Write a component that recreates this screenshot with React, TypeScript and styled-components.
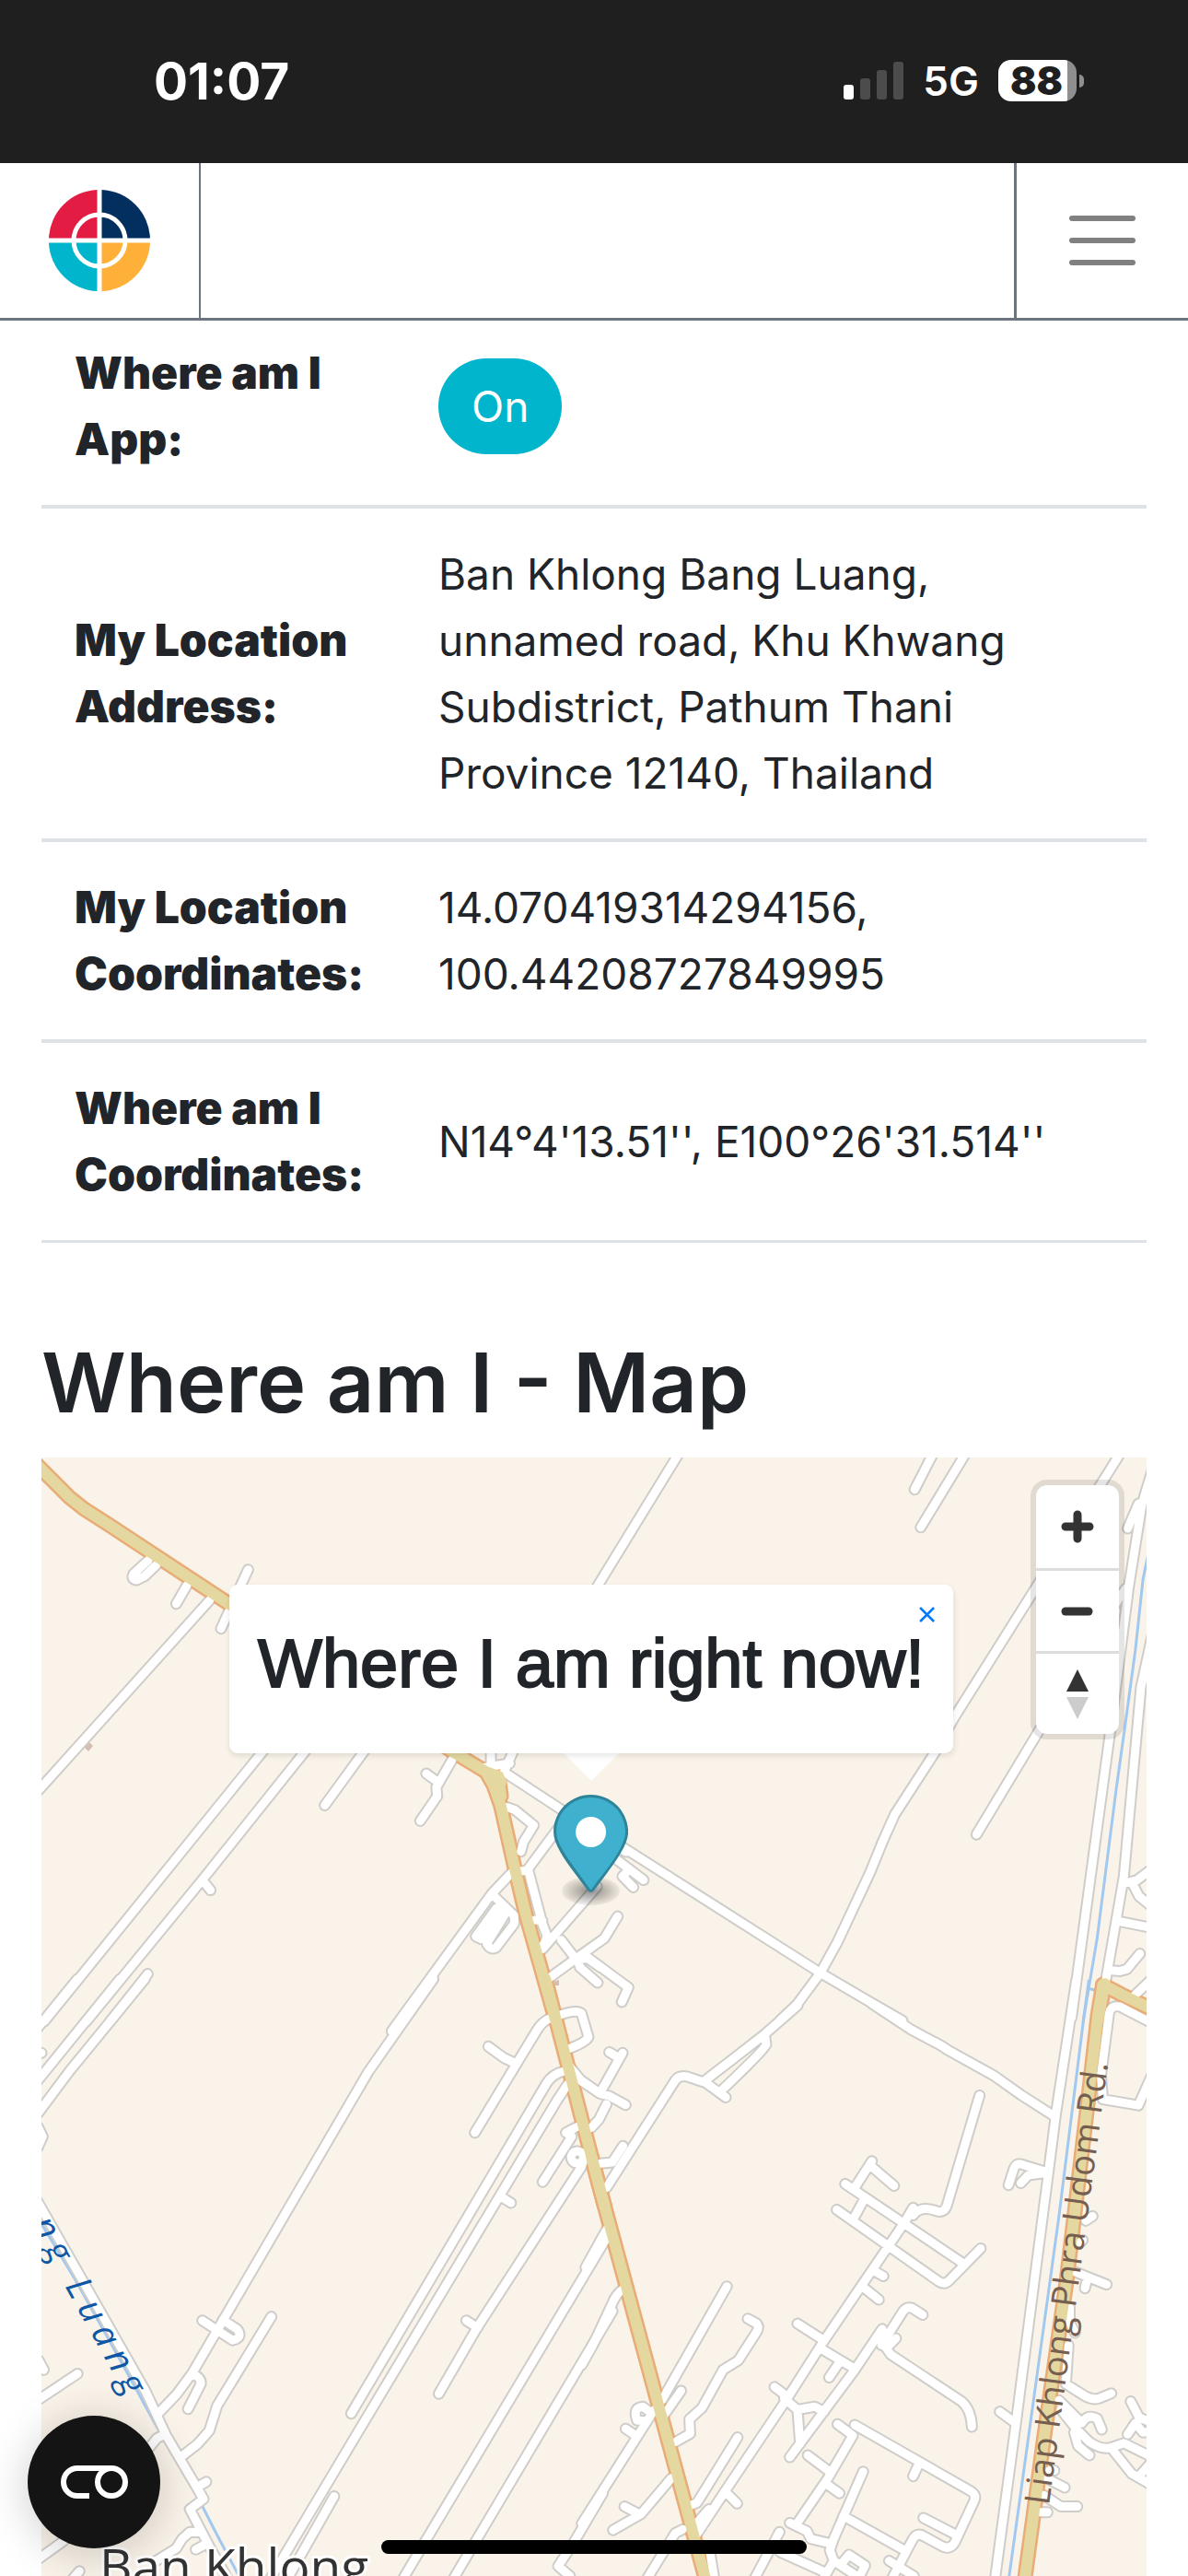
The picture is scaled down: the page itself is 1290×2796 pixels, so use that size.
import React from "react";
import styled, { createGlobalStyle } from "styled-components";

const GlobalStyle = createGlobalStyle`
  *, *::before, *::after { box-sizing: border-box; }
  body {
    margin: 0;
    background: #fff;
    color: #212529;
    font-family: Inter, "Liberation Sans", sans-serif;
    font-size: 46px;
    line-height: 72px;
  }
`;

const Page = styled.div`
  display: flex;
  flex-direction: column;
  min-height: 100vh;
`;

/* ---------- status bar ---------- */

const StatusBar = styled.div`
  display: flex;
  align-items: center;
  justify-content: space-between;
  height: 177px;
  padding: 0 113px 2px 167px;
  background: #1f1f1f;
  color: #fff;
`;

const Clock = styled.time`
  font-size: 55px;
  font-weight: 700;
`;

const StatusIcons = styled.div`
  display: flex;
  align-items: center;
`;

const Network = styled.span`
  margin: 0 21px;
  font-size: 44px;
  font-weight: 600;
`;

const Battery = styled.div`
  display: flex;
  align-items: center;
  gap: 3px;
`;

const BatteryBody = styled.div`
  width: 85px;
  height: 45px;
  padding-left: 13px;
  border-radius: 14px;
  background: linear-gradient(to right, #fff 75px, #8f8f8f 75px);
  color: #1f1f1f;
  font-size: 42px;
  font-weight: 900;
  line-height: 45px;
`;

const BatteryTip = styled.div`
  width: 5px;
  height: 14px;
  border-radius: 0 5px 5px 0;
  background: #8f8f8f;
`;

/* ---------- navigation ---------- */

const NavBar = styled.header`
  display: flex;
  align-items: stretch;
  justify-content: space-between;
  height: 171px;
  border-bottom: 3px solid #6c757d;
  background: #fff;
`;

const LogoLink = styled.a`
  display: flex;
  align-items: center;
  padding: 0 53px;
  border-right: 2px solid #6c757d;
`;

const MenuButton = styled.button`
  display: flex;
  flex-direction: column;
  align-items: center;
  justify-content: center;
  gap: 18px;
  padding: 0 57px;
  border: 0;
  border-left: 3px solid #6c757d;
  background: none;
`;

const MenuLine = styled.span`
  width: 72px;
  height: 6px;
  border-radius: 3px;
  background: #808080;
`;

/* ---------- content ---------- */

const Content = styled.main`
  display: flex;
  flex: 1;
  flex-direction: column;
  padding: 0 45px;
`;

const InfoTable = styled.table`
  width: 100%;
  margin-bottom: 94px;
  border-collapse: separate;
  border-spacing: 0;
  border-bottom: 3px solid #dee2e6;
`;

const Row = styled.tr`
  & + & > * {
    border-top: 4px solid #dee2e6;
    padding-top: 35px;
  }
`;

const Label = styled.th`
  width: 395px;
  padding: 21px 36px 35px;
  font-size: 48px;
  font-weight: 900;
  text-align: left;
`;

const Value = styled.td`
  padding: 21px 36px 35px;
`;

const ToggleButton = styled.button`
  display: block;
  padding: 16px 36px;
  border: 0;
  border-radius: 52px;
  background: #00b5cc;
  color: #fff;
  font: inherit;
`;

const Heading = styled.h2`
  margin: 0 0 24px;
  font-size: 90px;
  font-weight: 600;
  line-height: 115px;
`;

/* ---------- map ---------- */

const MapFrame = styled.section`
  position: relative;
  flex: 1;
  min-height: 900px;
  overflow: hidden;
  background: #faf3e9;
`;

const MapCanvas = styled.svg`
  position: absolute;
  inset: 0;
  width: 100%;
  height: 100%;
`;

const MapControls = styled.div`
  position: absolute;
  top: 30px;
  right: 30px;
  display: flex;
  flex-direction: column;
  width: 90px;
  border-radius: 12px;
  background: #fff;
  box-shadow: 0 0 0 6px rgba(0, 0, 0, 0.1);
`;

const ControlButton = styled.button`
  display: flex;
  align-items: center;
  justify-content: center;
  height: 90px;
  padding: 0;
  border: 0;
  background: none;

  & + & {
    border-top: 3px solid #ddd;
  }
`;

const PlaceAnchor = styled.div`
  position: absolute;
  top: 138px;
  left: 49.75%;
  display: flex;
  flex-direction: column;
  align-items: center;
  transform: translateX(-50%);
`;

const Popup = styled.div`
  position: relative;
  padding: 30px 31px;
  border-radius: 9px;
  background: #fff;
  box-shadow: 0 3px 6px rgba(0, 0, 0, 0.1);
`;

const PopupTitle = styled.h3`
  margin: 0;
  padding: 13px 0 24px;
  font-family: "Liberation Sans", Arial, sans-serif;
  font-size: 74px;
  font-weight: 400;
  line-height: 86px;
  white-space: nowrap;
  -webkit-text-stroke: 2px #212529;
`;

const PopupClose = styled.button`
  position: absolute;
  top: 15px;
  right: 11px;
  display: flex;
  padding: 9px;
  border: 0;
  background: none;
`;

const PopupTip = styled.div`
  margin-bottom: 15px;
  border: 30px solid transparent;
  border-top-color: #fff;
  border-bottom: 0;
`;

/* ---------- floating parts ---------- */

const CookieButton = styled.button`
  position: fixed;
  bottom: 30px;
  left: 30px;
  display: flex;
  align-items: center;
  justify-content: center;
  width: 144px;
  height: 144px;
  padding: 0;
  border: 0;
  border-radius: 50%;
  background: #141414;
  box-shadow: 0 6px 48px rgba(0, 0, 0, 0.2);
`;

const HomeIndicator = styled.div`
  position: fixed;
  bottom: 24px;
  left: 50%;
  width: 462px;
  height: 15px;
  border-radius: 8px;
  background: #000;
  transform: translateX(-50%);
`;

/* ---------- map data ---------- */

type Tile = { transform: string; lanes: string; highways: string; water: string };

const tiles: Tile[] = [
  {
    transform: "translate(-5 -12) scale(.40816 .39541)",
    highways:
      "M-20 30L12 62L85 138L125 171L190 214L520 438L1110 840L1195 893L1215 930L1234 985L1272 1160L1300 1282L1335 1410L1380 1575 M1195 893L1228 905L1235 960",
    water: "",
    lanes: `M562 338L490 500 M297 312L257 350Q250 364 265 367L287 356L318 325 M400 380L371 432
      M460 422L-20 972 M660 762L20 1578 M740 803L440 1190L132 1578 M440 1190L462 1218 M900 795L766 985
      M295 1448L195 1578 M1105 860L1063 935L1065 960L1020 1028 M1036 898L1068 922
      M1208 830L1208 880 M1268 835L1242 895 M1185 882L1258 870 M1245 895L1567 1113
      M1250 990L1272 998L1322 1040L1295 1085L1288 1112 M1400 1030L1303 1165L1285 1165
      M1265 1168L1210 1228L970 1568L944 1605 M1308 1165L1345 1310L1358 1345L1345 1375
      M1325 1300L1345 1302 M1490 1208L1345 1380
      M1210 1228L1270 1288L1270 1310L1222 1375Q1208 1385 1197 1365L1248 1280 M1222 1268L1168 1345L1182 1352L1235 1272
      M1395 1355L1440 1415L1445 1430L1492 1472 M1545 1290L1510 1350L1435 1405L1355 1465 M1440 1408L1465 1405L1500 1430`,
  },
  {
    transform: "translate(595 -12) scale(.41454 .39541)",
    highways: "M1350 1475L1332 1575 M1345 1478L1395 1505L1475 1545",
    water: "M1465 290L1450 365L1430 560L1404 760L1380 940L1330 1350L1293 1580 M1308 1488L1325 1492",
    lanes: `M235 18L-40 488 M900 20L852 118 M985 20L868 222 M1390 20L1345 95L955 745L905 840L800 1010L770 1080L735 1170L650 1360L605 1445L545 1530L500 1575
      M1476 60L1447 160L1413 385L1362 800L1263 1568 M1438 157L1410 225 M1405 390L1385 420L1175 785L1014 1065
      M1474 520L1445 660L1437 750L1400 1180L1352 1470 M1400 1200L1435 1190L1475 1158 M1425 1205L1440 1235L1475 1265
      M1385 1303L1475 1322 M1362 1438L1390 1440L1408 1435L1442 1392 M1420 1515L1475 1460
      M80 1095L605 1445L740 1528L820 1576 M60 1125L142 1190 M105 1160L87 1180L115 1210
      M-5 1402L102 1485L85 1525`,
  },
  {
    transform: "translate(-45 568) scale(.42092 .41199)",
    highways: "M1407 -5L1500 362L1560 595",
    water: "M95 620L190 780L300 980L410 1185L500 1340L560 1460L620 1575",
    lanes: `M200 -5L90 133 M310 -5L90 272 M374 -5L180 237L90 360 M95 190L107 190 M98 385L110 410L98 438
      M1118 -5L950 240L575 895L495 1035L455 1090L410 1138 M522 895L600 947Q628 940 612 918L575 893
      M495 1035Q520 1045 518 1062L485 1128 M700 885L560 1120L540 1185L510 1220L470 1252
      M95 578L205 775L375 1080L430 1200L525 1365L490 1392L540 1490L590 1580 M425 1195L405 1205L385 1230
      M515 1330L532 1320 M515 1453L490 1452L470 1470L455 1495L400 1530 M505 1498L535 1482
      M200 1035L90 1110 M100 1000L113 1025 M165 1475L90 1530 M205 1555L180 1585
      M1420 98Q1398 108 1385 130L1225 400 M1260 173L1300 203L1325 215 M1445 90Q1490 74 1500 86L1518 148Q1515 160 1470 178
      M1455 238Q1425 245 1410 270L906 1140 M1465 272L1437 315L1290 565L917 1200L695 1580 M1290 567L1318 585
      M862 1358L740 1578 M1488 385L1460 400L1475 410L1400 530 M1490 449A16 16 0 1 1 1489 449 M1508 465L1500 490L1230 915L1132 1088
      M1203 895L1232 914 M1568 672L1098 1475L1040 1575 M1580 870L1225 1480L1170 1575 M1555 1350L1480 1480L1440 1542L1470 1568
      M1490 255L1545 295`,
  },
  {
    transform: "translate(595 568) scale(.41454 .41199)",
    highways: "M5 462L20 520L302 1568L310 1600 M1345 10L1332 90L1308 300L1250 790L1190 1210L1140 1580",
    water: "M1308 0L1295 97L1230 620L1160 1130L1098 1580",
    lanes: `M740 60L845 130L920 170L940 183L1060 250L1130 300L1215 355 M545 65L460 140L390 195L300 265L357 307
      M460 145L463 168Q460 180 345 290 M300 267L255 252Q235 248 225 262L45 545
      M1275 0L1222 350L1203 500L1118 1160L1062 1580 M1195 503L1130 483Q1118 480 1112 495L1098 538 M1130 533L1150 512L1190 507
      M1075 1135L1112 1162 M1022 302L937 590Q930 615 905 605Q865 592 848 618 M848 598L825 637L610 955L515 1105L355 1345L280 1460
      M740 475L695 545 M740 490L798 540 M670 535L980 745 M720 575L690 630 M648 603L915 792Q930 802 942 790L1025 705
      M742 762L770 778 M715 805L758 840 M545 903L610 945 M605 968L695 1022 M655 1005L628 1045
      M873 880L845 862Q830 858 822 870L765 960 M767 917L695 1025L525 1255 M765 950L790 985L975 1108Q1000 1130 1002 1175 M803 942L778 968
      M485 1070L518 1095 M510 1100L545 1130L590 1122L615 1135 M545 1130L552 1220
      M650 1168L690 1198L625 1310L540 1435 M572 1250L625 1290 M620 1325L655 1350
      M695 1170L1000 1345Q1015 1355 1008 1370L957 1480Q945 1500 925 1490L870 1460Q855 1455 845 1475L790 1580
      M862 1275L848 1305 M875 1415L965 1462 M717 1293L640 1470L630 1500L640 1528L610 1580 M665 1410L825 1500
      M525 1428L570 1450L580 1470L630 1482 M498 1452L430 1580 M500 1505L610 1555 M640 1528L700 1568
      M665 1530L680 1512L722 1540L705 1575 M785 1528L850 1568 M360 805L190 1105 M240 1080L195 1145
      M415 890L438 903Q446 912 438 925L390 1000L350 1025L295 1125L262 1155L264 1193L225 1215
      M388 1203L282 1375L265 1382 M313 1392L280 1430 M355 1345L387 1377
      M170 1130L-20 1430 M150 1160L125 1158Q112 1125 140 1122L162 1138 M95 1180L125 1200 M215 1310L135 1405L62 1447 M92 1385L130 1405
      M245 1445L225 1455L148 1580 M315 1500L328 1580 M88 812Q70 825 60 850L10 958L-20 1012 M45 655L-10 755
      M28 481L60 478L88 435 M5 387L25 365L45 325 M30 292L87 190 M52 188L72 200 M-60 215L-20 265L30 298L52 303L95 327
      M1480 115L1390 68Q1362 62 1360 95L1340 250L1345 312L1438 328L1475 245
      M1318 620L1300 632 M1292 683L1285 690 M1275 768L1355 800 M1305 780L1298 810 M1258 860L1258 900L1272 927
      M1255 960L1248 1062L1300 1095Q1320 1105 1335 1100L1367 1087 M1230 1105L1290 1165Q1305 1140 1330 1153L1342 1182
      M1235 1130L1275 1180L1310 1215Q1340 1235 1365 1230L1400 1218L1475 1255 M1270 1190L1280 1225L1310 1250
      M1370 1235L1420 1298L1475 1330 M1475 1265L1440 1305 M1418 1108L1440 1150L1475 1165 M1410 1195L1430 1165L1450 1190L1475 1187
      M1205 1290L1218 1290 M1200 1312L1245 1335 M1190 1355L1235 1385L1278 1385 M1180 1400L1200 1400`,
  },
];

type LayerProps = { pick: "lanes" | "highways" | "water"; color: string; width: number };

const MapLayer = ({ pick, color, width }: LayerProps) => (
  <g fill="none" stroke={color} strokeWidth={width} strokeLinecap="round" strokeLinejoin="round">
    {tiles.map((tile) => (
      <path key={tile.transform} transform={tile.transform} d={tile[pick]} vectorEffect="non-scaling-stroke" />
    ))}
  </g>
);

const MapDrawing = () => (
  <MapCanvas viewBox="0 0 1200 1214" preserveAspectRatio="xMidYMin slice" role="img" aria-label="Street map">
    <MapLayer pick="water" color="#a0c8f0" width={3} />
    <MapLayer pick="lanes" color="#cfcdca" width={13} />
    <MapLayer pick="highways" color="#e9ac77" width={17} />
    <MapLayer pick="lanes" color="#fff" width={9} />
    <MapLayer pick="highways" color="#e4d8a0" width={12} />
    <circle cx="496" cy="352" r="9" fill="#e4d8a0" />
    <path d="M47 315l5-6 4 4-5 6zM556 569l6-2v6h-5z" fill="#d2bfb2" />
    <text
      transform="translate(1094 1138) rotate(-82.4)"
      fontFamily="Open Sans, Noto Sans, sans-serif"
      fontSize="38"
      fill="#765f51"
    >
      Liap Khlong Phra Udom Rd.
    </text>
    <text
      transform="translate(96 1027) rotate(61)"
      textAnchor="end"
      fontFamily="Open Sans, Noto Sans, sans-serif"
      fontSize="39"
      fontStyle="italic"
      letterSpacing="8"
      fill="#0d57a5"
    >
      ng Luang
    </text>
    <text
      x="63"
      y="1224"
      fontFamily="Open Sans, Noto Sans, sans-serif"
      fontSize="55"
      fill="#333"
      stroke="#fff"
      strokeWidth="6"
      strokeLinejoin="round"
      paintOrder="stroke"
    >
      Ban Khlong
    </text>
  </MapCanvas>
);

const Logo = () => (
  <svg width="110" height="110" viewBox="0 0 110 110" aria-hidden="true">
    <path d="M52.5 0A55 55 0 0 0 0 52.5H52.5Z" fill="#e31c44" />
    <path d="M57.5 0A55 55 0 0 1 110 52.5H57.5Z" fill="#032f5f" />
    <path d="M0 57.5A55 55 0 0 0 52.5 110V57.5Z" fill="#00b5cc" />
    <path d="M110 57.5A55 55 0 0 1 57.5 110V57.5Z" fill="#ffb038" />
    <circle cx="55" cy="55" r="28" fill="none" stroke="#fff" strokeWidth="5" />
  </svg>
);

const SignalIcon = () => (
  <svg width="65" height="41" viewBox="0 0 65 41" aria-label="Signal: one bar">
    <rect x="0" y="25" width="11" height="16" rx="3" fill="#fff" />
    <rect x="18" y="18" width="11" height="23" rx="3" fill="#4c4c4c" />
    <rect x="36" y="9" width="11" height="32" rx="3" fill="#4c4c4c" />
    <rect x="54" y="0" width="11" height="41" rx="3" fill="#4c4c4c" />
  </svg>
);

const Marker = () => (
  <svg width="81" height="123" viewBox="0 0 27 41" aria-label="My location">
    <defs>
      <radialGradient id="pin-shadow">
        <stop offset="10%" stopOpacity="0.4" />
        <stop offset="100%" stopOpacity="0.05" />
      </radialGradient>
    </defs>
    <ellipse cx="13.5" cy="34.8" rx="10.5" ry="5.25" fill="url(#pin-shadow)" />
    <path
      fill="#3fb1ce"
      d="M27 13.5C27 19.07 20.25 27 14.75 34.5C14.02 35.5 12.98 35.5 12.25 34.5C6.75 27 0 19.22 0 13.5C0 6.04 6.04 0 13.5 0C20.96 0 27 6.04 27 13.5Z"
    />
    <path
      opacity="0.25"
      d="M13.5 0C6.04 0 0 6.04 0 13.5C0 19.22 6.75 27 12.25 34.5C13 35.52 14.02 35.5 14.75 34.5C20.25 27 27 19.07 27 13.5C27 6.04 20.96 0 13.5 0ZM13.5 1C20.42 1 26 6.58 26 13.5C26 15.9 24.5 19.18 22.22 22.74C19.95 26.3 16.71 30.14 13.94 33.91C13.74 34.18 13.66 34.26 13.5 34.44C13.34 34.26 13.26 34.18 13.06 33.91C10.28 30.13 7.41 26.31 5.02 22.77C2.62 19.23 1 15.95 1 13.5C1 6.58 6.58 1 13.5 1Z"
    />
    <circle cx="13.5" cy="13.5" r="5.5" fill="#fff" />
  </svg>
);

const rows: { label: string[]; value: React.ReactNode }[] = [
  { label: ["Where am I", "App:"], value: <ToggleButton type="button">On</ToggleButton> },
  {
    label: ["My Location", "Address:"],
    value: (
      <>
        Ban Khlong Bang Luang,
        <br />
        unnamed road, Khu Khwang
        <br />
        Subdistrict, Pathum Thani
        <br />
        Province 12140, Thailand
      </>
    ),
  },
  {
    label: ["My Location", "Coordinates:"],
    value: (
      <>
        14.070419314294156,
        <br />
        100.44208727849995
      </>
    ),
  },
  { label: ["Where am I", "Coordinates:"], value: "N14°4'13.51'', E100°26'31.514''" },
];

export default function App() {
  return (
    <Page>
      <GlobalStyle />
      <StatusBar>
        <Clock>01:07</Clock>
        <StatusIcons>
          <SignalIcon />
          <Network>5G</Network>
          <Battery>
            <BatteryBody>88</BatteryBody>
            <BatteryTip />
          </Battery>
        </StatusIcons>
      </StatusBar>

      <NavBar>
        <LogoLink href="#" aria-label="Home">
          <Logo />
        </LogoLink>
        <MenuButton type="button" aria-label="Open menu">
          <MenuLine />
          <MenuLine />
          <MenuLine />
        </MenuButton>
      </NavBar>

      <Content>
        <InfoTable>
          <tbody>
            {rows.map(({ label, value }) => (
              <Row key={label.join(" ")}>
                <Label scope="row">
                  {label[0]}
                  <br />
                  {label[1]}
                </Label>
                <Value>{value}</Value>
              </Row>
            ))}
          </tbody>
        </InfoTable>

        <Heading>Where am I - Map</Heading>

        <MapFrame>
          <MapDrawing />
          <PlaceAnchor>
            <Popup>
              <PopupTitle>Where I am right now!</PopupTitle>
              <PopupClose type="button" aria-label="Close popup">
                <svg width="17" height="17" viewBox="0 0 17 17" stroke="#007bff" strokeWidth="2.5">
                  <path d="M1 1L16 16M16 1L1 16" />
                </svg>
              </PopupClose>
            </Popup>
            <PopupTip />
            <Marker />
          </PlaceAnchor>
          <MapControls>
            <ControlButton type="button" aria-label="Zoom in">
              <svg width="36" height="36" viewBox="0 0 36 36" stroke="#333" strokeWidth="9" strokeLinecap="round">
                <path d="M5 18H31M18 5V31" />
              </svg>
            </ControlButton>
            <ControlButton type="button" aria-label="Zoom out">
              <svg width="36" height="36" viewBox="0 0 36 36" stroke="#333" strokeWidth="9" strokeLinecap="round">
                <path d="M5 18H30" />
              </svg>
            </ControlButton>
            <ControlButton type="button" aria-label="Reset bearing to north">
              <svg width="24" height="54" viewBox="0 0 24 54">
                <path d="M12 0L24 24H0Z" fill="#333" />
                <path d="M12 54L24 30H0Z" fill="#ccc" />
              </svg>
            </ControlButton>
          </MapControls>
        </MapFrame>
      </Content>

      <CookieButton type="button" aria-label="Cookie settings">
        <svg width="73" height="36" viewBox="0 0 73 36" fill="none" stroke="#fff" strokeWidth="6">
          <path d="M31 33H18A15 15 0 0 1 18 3H54" />
          <circle cx="55" cy="18" r="15" />
        </svg>
      </CookieButton>
      <HomeIndicator />
    </Page>
  );
}
